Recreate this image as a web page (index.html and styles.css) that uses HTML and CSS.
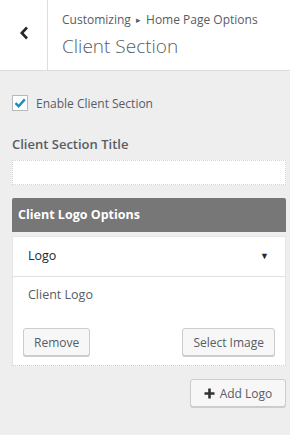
FILE: index.html
```html
<!DOCTYPE html>
<html lang="en">
<head>
    <meta charset="UTF-8">
    <meta name="viewport" content="width=device-width, initial-scale=1.0">
    <title>Client Section</title>
    <link rel="stylesheet" href="styles.css">
</head>
<body>
    <header class="section-head">
        <button class="back-btn" aria-label="Back">
            <svg width="10" height="14" viewBox="0 0 10 14"><path d="M8 1.5 L2.8 7 L8 12.5" fill="none" stroke="#23282d" stroke-width="2.6"/></svg>
        </button>
        <div class="head-title">
            <span class="crumb">Customizing <span class="crumb-sep">&#9656;</span> Home Page Options</span>
            <h1>Client Section</h1>
        </div>
    </header>

    <main class="controls">
        <label class="check-row">
            <span class="checkbox">
                <svg width="14" height="14" viewBox="0 0 14 14"><path d="M2.5 7.2 L5.6 10.2 L11.8 3.4" fill="none" stroke="#1e8cbe" stroke-width="2.4"/></svg>
            </span>
            Enable Client Section
        </label>

        <div class="field">
            <span class="field-label">Client Section Title</span>
            <input type="text" class="text-input">
        </div>

        <div class="repeater">
            <div class="repeater-head">Client Logo Options</div>
            <div class="repeater-item">
                <div class="item-top">
                    <span>Logo</span>
                    <span class="arrow">&#9660;</span>
                </div>
                <div class="item-body">
                    <span class="item-label">Client Logo</span>
                    <div class="item-actions">
                        <button class="btn">Remove</button>
                        <button class="btn">Select Image</button>
                    </div>
                </div>
            </div>
            <div class="repeater-foot">
                <button class="btn add-btn">
                    <svg width="11" height="11" viewBox="0 0 11 11"><path d="M5.5 0.5 V10.5 M0.5 5.5 H10.5" stroke="#333" stroke-width="2.6"/></svg>
                    Add Logo
                </button>
            </div>
        </div>
    </main>
</body>
</html>
```

FILE: styles.css
```css
* {
    margin: 0;
    padding: 0;
    box-sizing: border-box;
}

body {
    font-family: "Open Sans", "Noto Sans", sans-serif;
    font-size: 12px;
    color: #555d66;
    background: #eeeeee;
    width: 290px;
    min-height: 435px;
}

/* header */
.section-head {
    display: flex;
    height: 71px;
    background: #fff;
    border-bottom: 1px solid #dddddd;
}

.back-btn {
    width: 48px;
    border: none;
    border-right: 1px solid #dddddd;
    background: #fff;
    display: flex;
    align-items: center;
    justify-content: center;
    padding-bottom: 4px;
}

.head-title {
    padding: 11px 0 0 14px;
    display: flex;
    flex-direction: column;
}

.crumb {
    font-size: 12px;
    line-height: 18px;
    color: #555d66;
}

.crumb-sep {
    font-size: 9px;
    padding: 0 2px;
    vertical-align: 1px;
}

.head-title h1 {
    font-size: 19px;
    font-weight: 300;
    line-height: 26px;
    margin-top: 4px;
    color: #555d66;
}

/* controls */
.controls {
    padding: 24px 4px 0 12px;
}

.check-row {
    display: flex;
    align-items: center;
    gap: 8px;
    height: 16px;
    font-size: 12px;
    color: #555d66;
}

.checkbox {
    width: 16px;
    height: 16px;
    border: 1px solid #b4b9be;
    background: #fff;
    display: flex;
    align-items: center;
    justify-content: center;
}

.field {
    margin-top: 23px;
}

.field-label {
    display: block;
    font-size: 13px;
    font-weight: 600;
    line-height: 20px;
    color: #555d66;
}

.text-input {
    display: block;
    width: 100%;
    height: 25px;
    margin-top: 6px;
    border: 1px dotted #d6d6d6;
    background: #fff;
}

.repeater {
    margin-top: 13px;
}

.repeater-head {
    height: 34px;
    background: #777777;
    color: #fff;
    font-weight: 700;
    font-size: 12.5px;
    line-height: 34px;
    padding-left: 6px;
    border-radius: 2px 2px 0 0;
}

.repeater-item {
    margin-top: 4px;
    background: #fff;
    border: 1px solid #e5e5e5;
    border-bottom: 1px dotted #cfcfcf;
}

.item-top {
    display: flex;
    justify-content: space-between;
    align-items: center;
    height: 40px;
    padding: 0 16px 2px 15px;
    border-bottom: 1px solid #e0e0e0;
    font-size: 12.5px;
    color: #23282d;
}

.arrow {
    font-size: 9px;
    color: #23282d;
}

.item-body {
    padding: 8px 10px 9px 10px;
}

.item-label {
    display: block;
    padding-left: 5px;
    font-size: 12.5px;
    line-height: 20px;
    color: #555d66;
}

.item-actions {
    display: flex;
    justify-content: space-between;
    margin-top: 23px;
}

.btn {
    font-family: inherit;
    font-size: 12px;
    color: #555d66;
    height: 28px;
    padding: 0 10px;
    background: #f7f7f7;
    border: 1px solid #cccccc;
    border-radius: 3px;
    box-shadow: 0 1px 0 #cccccc;
}

.repeater-foot {
    display: flex;
    justify-content: flex-end;
    margin-top: 13px;
}

.add-btn {
    display: flex;
    align-items: center;
    gap: 5px;
    width: 96px;
    justify-content: center;
}
```
